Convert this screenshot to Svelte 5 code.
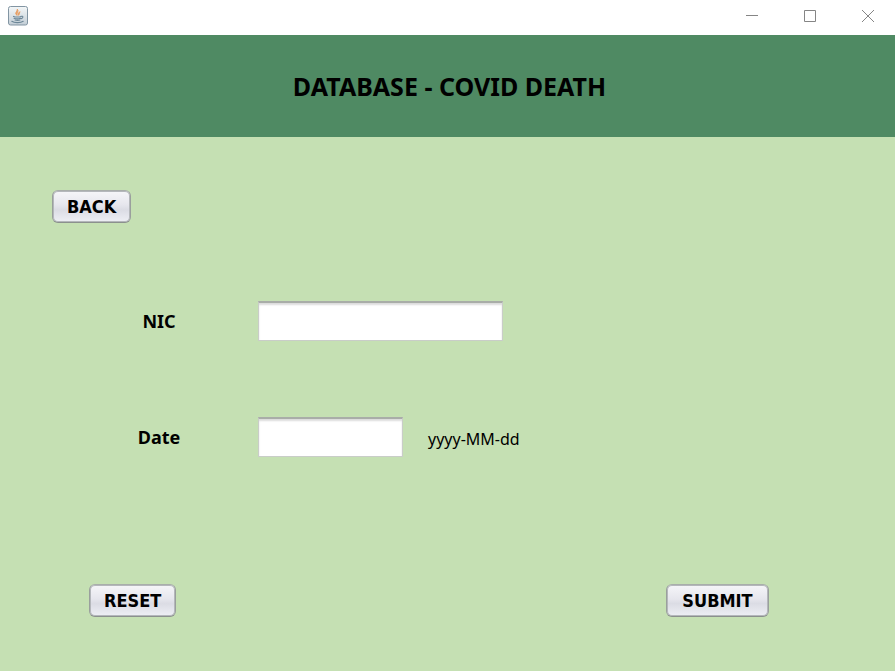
<script>
  let nic = $state('');
  let date = $state('');

  function reset() {
    nic = '';
    date = '';
  }
</script>

<div class="window">
  <div class="titlebar">
    <svg class="java" width="20" height="20" viewBox="0 0 20 20" aria-hidden="true">
      <defs>
        <linearGradient id="tile" x1="0" y1="0" x2="0" y2="1">
          <stop offset="0" stop-color="#f4f7f8" />
          <stop offset="1" stop-color="#c3ced6" />
        </linearGradient>
      </defs>
      <rect x="0.5" y="0.5" width="19" height="18.5" rx="2" fill="url(#tile)" stroke="#8295a3" />
      <path d="M9.200 9.400C6 7.200 9.200 6 9.300 3.200c2 2.200-1.200 3.600-.1 6.200zM10.600 9.300c-1.400-1.800.4-2.600 1.200-3.600-.1 1.600-.4 2.200-1.200 3.600z" fill="#e8a066" stroke="#e8a066" stroke-width="1" />
      <g fill="none" stroke="#6d8798" stroke-width="1.100" stroke-linecap="round">
        <path d="M5.500 10.400c2 .8 6 .8 7.500 0M6 12.300c2 .7 4.800.7 6.500 0M7 14c1.500.5 3.500.5 5 0M13 10.400c2.500-.8 2.500 1.600.2 2.200" />
        <path d="M3.800 15.300c2.500 1.800 9 1.700 11.400 0" />
      </g>
    </svg>
    <div class="controls">
      <button class="control" aria-label="Minimize">
        <svg width="12" height="12" viewBox="0 0 12 12"><path d="M0 5.500H12" /></svg>
      </button>
      <button class="control" aria-label="Maximize">
        <svg width="12" height="12" viewBox="0 0 12 12"><path d="M.5.5h11v11H.5z" /></svg>
      </button>
      <button class="control" aria-label="Close">
        <svg width="12" height="12" viewBox="0 0 12 12"><path d="M0 0L12 12M12 0L0 12" /></svg>
      </button>
    </div>
  </div>

  <header>
    <h1>DATABASE - COVID DEATH</h1>
  </header>

  <main>
    <button class="push back" type="button">BACK</button>
    <form onsubmit={(e) => e.preventDefault()}>
      <div class="row">
        <label for="nic">NIC</label>
        <input id="nic" class="wide" type="text" bind:value={nic} />
      </div>
      <div class="row">
        <label for="date">Date</label>
        <input id="date" class="narrow" type="text" aria-describedby="format" bind:value={date} />
        <span id="format">yyyy-MM-dd</span>
      </div>
      <div class="actions">
        <button class="push" type="button" onclick={reset}>RESET</button>
        <button class="push submit" type="submit">SUBMIT</button>
      </div>
    </form>
  </main>
</div>

<style>
  :global(body) {
    margin: 0;
    background: #c5e0b3;
  }

  .window {
    min-height: 100vh;
    display: flex;
    flex-direction: column;
    background: #c5e0b3;
    color: #000;
    font-family: "Noto Sans", Tahoma, sans-serif;
  }

  .titlebar {
    height: 35px;
    display: flex;
    justify-content: space-between;
    background: #fff;
  }

  .java {
    margin: 6px 0 0 8px;
  }

  .controls {
    display: flex;
  }

  .control {
    width: 58px;
    height: 32px;
    display: flex;
    align-items: center;
    justify-content: center;
    padding: 0;
    border: 0;
    background: none;
  }

  .control:last-child {
    width: 56px;
    padding-left: 2px;
  }

  .control path {
    fill: none;
    stroke: #858585;
    stroke-width: 1;
  }

  header {
    height: 102px;
    display: flex;
    align-items: center;
    justify-content: center;
    background: #4f8a63;
  }

  h1 {
    margin: 0;
    padding-left: 4px;
    font-size: 25px;
    line-height: 32px;
    font-weight: 700;
  }

  main {
    padding-top: 53px;
  }

  .push {
    height: 33px;
    padding: 0 14px;
    border: 1px solid;
    border-color: #a9aeab #9a9f9d #8b908e;
    border-radius: 6px;
    background: linear-gradient(#f6f6f9, #e6e6ed 45%, #dbdce4 60%, #eeeff5);
    box-shadow: inset 0 0 0 1px #b4b7bb;
    color: #000;
    font-family: "DejaVu Sans Condensed", Tahoma, sans-serif;
    font-size: 18px;
    line-height: 24px;
    font-weight: 700;
  }

  .back {
    display: block;
    margin-left: 52px;
  }

  .submit {
    min-width: 103px;
  }

  form {
    padding-top: 78px;
    display: flex;
    flex-direction: column;
    gap: 76px;
  }

  .row {
    display: flex;
    align-items: center;
    padding-left: 60px;
  }

  label {
    width: 198px;
    text-align: center;
    font-size: 18px;
    line-height: 24px;
    font-weight: 700;
  }

  input {
    box-sizing: border-box;
    height: 40px;
    padding: 2px 6px;
    border: 1px solid #c9cdc8;
    border-top: 2px solid #a9ada8;
    background: #fff;
    box-shadow: inset 0 2px 2px #dcdcdc;
    font: inherit;
    font-size: 16px;
  }

  .wide {
    width: 245px;
  }

  .narrow {
    width: 145px;
  }

  span {
    margin-left: 25px;
    padding-top: 4px;
    font-size: 16px;
    line-height: 24px;
  }

  .actions {
    display: flex;
    justify-content: space-between;
    padding: 51px 126px 0 89px;
  }
</style>
